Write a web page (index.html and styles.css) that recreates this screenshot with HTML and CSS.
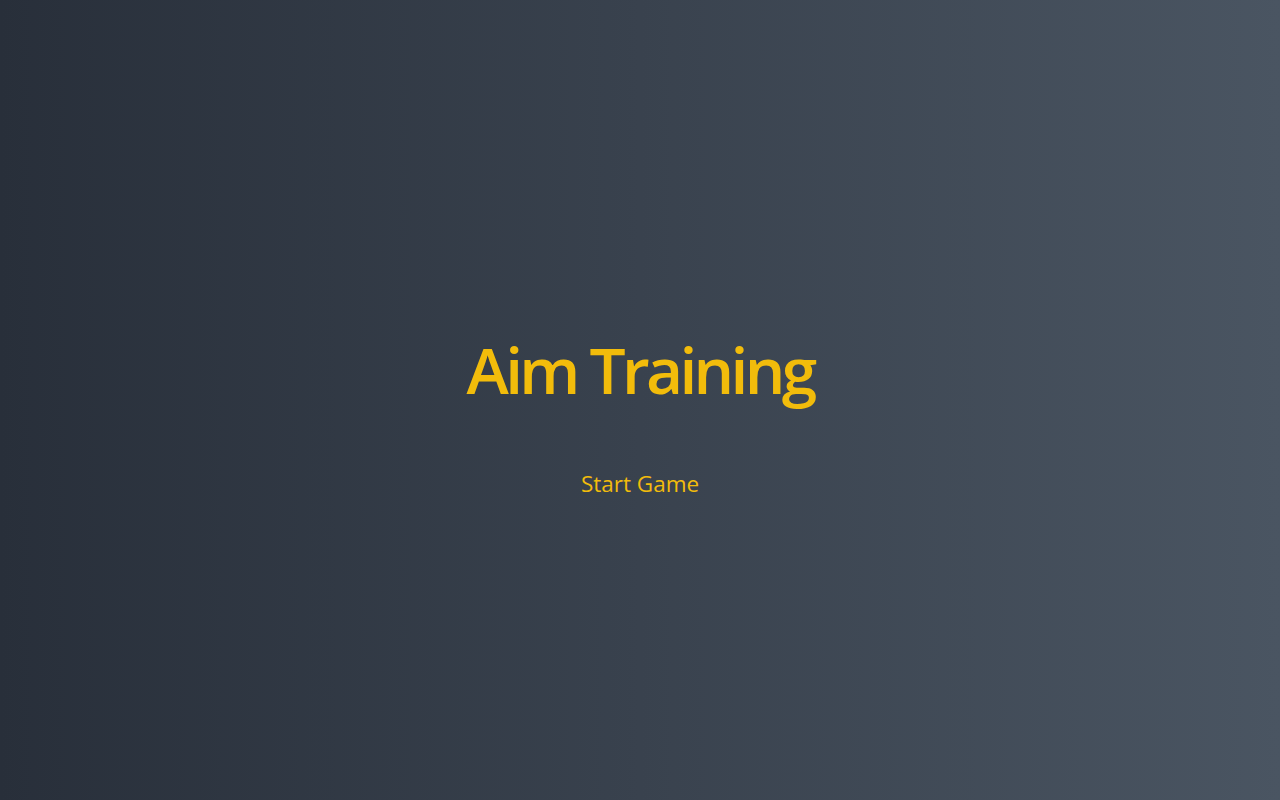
FILE: index.html
```html
<!DOCTYPE html>
<html lang="en">
<head>
<meta charset="utf-8">
<title>Aim Training</title>
<link rel="stylesheet" href="styles.css">
</head>
<body>
<main class="screen">
  <h1 class="title">Aim Training</h1>
  <button class="start">Start Game</button>
</main>
</body>
</html>
```
FILE: styles.css
```css
* { box-sizing: border-box; }
html, body { margin: 0; height: 100%; }
body {
  font-family: "Open Sans", "Noto Sans", sans-serif;
  background: linear-gradient(to right, #282f3a, #4a5562);
  color: #f2bc0b;
}
.screen {
  min-height: 100vh;
  padding-top: 39px;
  display: flex;
  flex-direction: column;
  align-items: center;
  justify-content: center;
  gap: 51px;
}
.title {
  margin: 0;
  font-size: 64px;
  font-weight: 600;
  letter-spacing: -3.7px;
  line-height: 1.2;
  color: #f2bc0b;
}
.start {
  background: transparent;
  border: none;
  font-family: inherit;
  font-size: 22.5px;
  color: #f2bc0b;
  padding: 8px 16px;
  cursor: pointer;
}
```
